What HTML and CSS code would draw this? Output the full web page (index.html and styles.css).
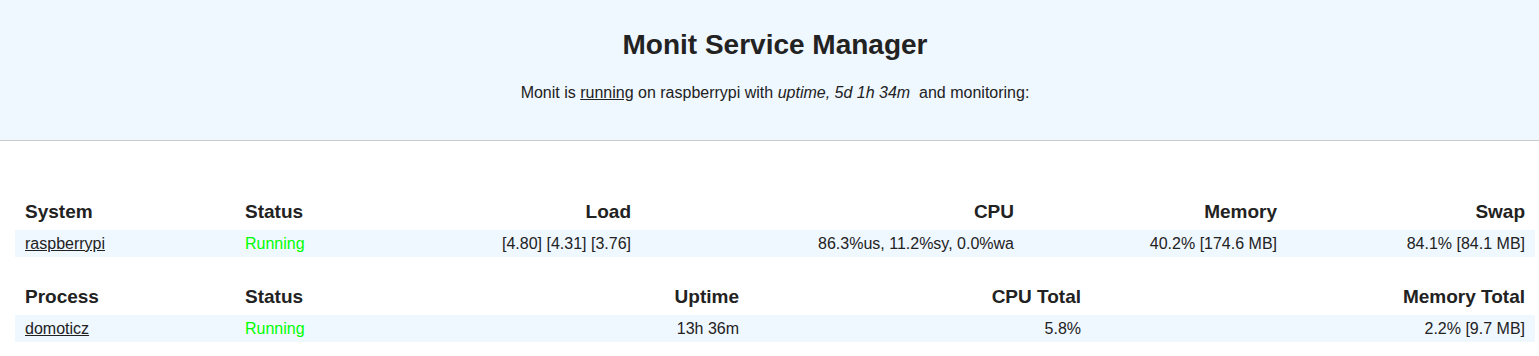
FILE: index.html
```html
<!DOCTYPE html>
<html lang="en">
<head>
  <meta charset="UTF-8" />
  <meta name="viewport" content="width=device-width, initial-scale=1.0" />
  <title>Monit: raspberrypi</title>
  <link rel="stylesheet" href="styles.css">
</head>

<body>
  <header class="header">
    <h1>Monit Service Manager</h1>
    <p>Monit is <a href="#">running</a> on raspberrypi with <i>uptime, 5d 1h 34m</i>&nbsp; and monitoring:</p>
  </header>

  <div class="content">
    <table class="status-table system-table">
      <colgroup>
        <col class="c-name"><col class="c-status"><col class="c-load">
        <col class="c-cpu"><col class="c-mem"><col class="c-swap">
      </colgroup>
      <tr>
        <th class="left">System</th>
        <th class="left">Status</th>
        <th class="right">Load</th>
        <th class="right">CPU</th>
        <th class="right">Memory</th>
        <th class="right">Swap</th>
      </tr>
      <tr class="stripe">
        <td class="left"><a href="#">raspberrypi</a></td>
        <td class="left green-text">Running</td>
        <td class="right">[4.80]&nbsp;[4.31]&nbsp;[3.76]</td>
        <td class="right">86.3%us,&nbsp;11.2%sy,&nbsp;0.0%wa</td>
        <td class="right">40.2% [174.6&nbsp;MB]</td>
        <td class="right">84.1% [84.1&nbsp;MB]</td>
      </tr>
    </table>

    <table class="status-table process-table">
      <colgroup>
        <col class="c-name"><col class="c-pstatus"><col class="c-uptime">
        <col class="c-cputotal"><col class="c-memtotal">
      </colgroup>
      <tr>
        <th class="left">Process</th>
        <th class="left">Status</th>
        <th class="right">Uptime</th>
        <th class="right">CPU Total</th>
        <th class="right">Memory Total</th>
      </tr>
      <tr class="stripe">
        <td class="left"><a href="#">domoticz</a></td>
        <td class="left green-text">Running</td>
        <td class="right">13h 36m</td>
        <td class="right">5.8%</td>
        <td class="right">2.2% [9.7&nbsp;MB]</td>
      </tr>
    </table>
  </div>
</body>
</html>
```

FILE: styles.css
```css
body {
  font-family: "Liberation Sans", Arial, sans-serif;
  color: #222;
  background: white;
  margin: 0;
  padding: 0;
}

a {
  color: #222;
}

.header {
  background: #eff7ff;
  border-bottom: 1px solid #ccc;
  text-align: center;
  padding: 29px 4px 38px 15px;
}

.header h1 {
  margin: 0;
  font-size: 28px;
  font-weight: bold;
}

.header p {
  margin: 23px 0 0;
  font-size: 16px;
}

.content {
  padding: 54px 4px 0 15px;
}

.status-table {
  width: 1520px;
  table-layout: fixed;
  border-collapse: collapse;
  margin-bottom: 23px;
}

.status-table th {
  font-size: 19px;
  font-weight: bold;
  padding: 6px 10px 7px;
}

.status-table td {
  font-size: 16px;
  height: 27px;
  padding: 0 10px;
  white-space: nowrap;
}

.stripe {
  background: #eff7ff;
}

.left {
  text-align: left;
}

.right {
  text-align: right;
}

.green-text {
  color: #00ff00;
}

.c-name { width: 220px; }
.c-status { width: 220px; }
.c-load { width: 186px; }
.c-cpu { width: 383px; }
.c-mem { width: 263px; }
.c-swap { width: 248px; }

.c-pstatus { width: 257px; }
.c-uptime { width: 257px; }
.c-cputotal { width: 342px; }
.c-memtotal { width: 444px; }
```
